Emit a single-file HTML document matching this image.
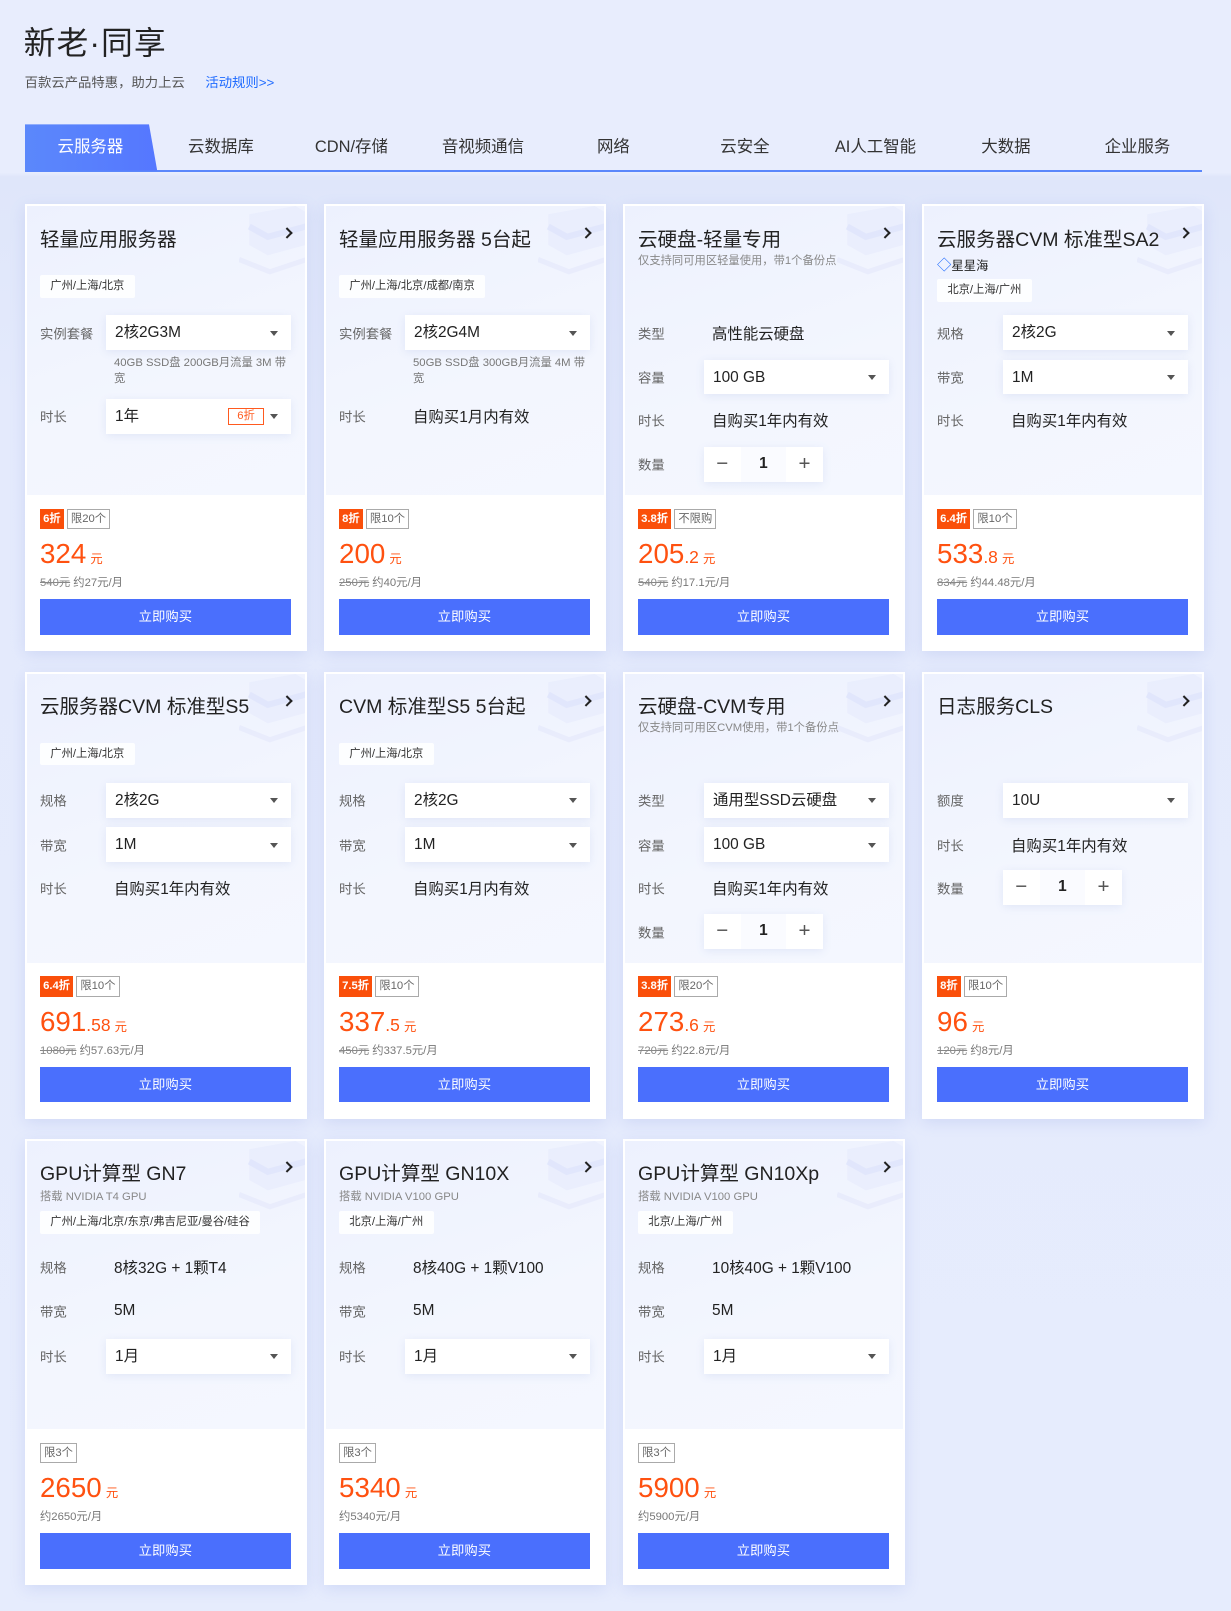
<!DOCTYPE html>
<html><head><meta charset="utf-8">
<style>
*{margin:0;padding:0;box-sizing:border-box}
html,body{width:1231px;height:1611px;overflow:hidden;background:#e3e9fb}
body{font-family:"Liberation Sans","Noto Sans CJK SC",sans-serif;color:#222}
#w{width:1198px;height:1568px;zoom:1.02755;position:relative;background:linear-gradient(180deg,#e8edfd 0,#e8edfd 168px,#dfe6fa 172px,#e4eafc 400px,#e6ecfd 100%)}
.h1{position:absolute;left:23px;top:18px;font-size:31px;color:#222;letter-spacing:1px}
.sub{position:absolute;left:24px;top:70px;font-size:13px;color:#555}
.sub a{color:#1f6bff;margin-left:20px;text-decoration:none}
.tabs{position:absolute;left:24px;top:121px;width:1146px;height:46px;border-bottom:2px solid #5b87fb}
.act{position:absolute;left:0;top:0;width:129px;height:45px;background:linear-gradient(90deg,#5b88fb,#5577ff);clip-path:polygon(0 0,121px 0,129px 45px,0 45px)}
.tab{position:absolute;top:0;height:45px;line-height:45px;font-size:16px;color:#333;transform:translateX(-50%);white-space:nowrap}
.card{position:absolute;width:275px;height:435px;background:#fff;box-shadow:0 4px 14px rgba(120,140,220,.2);overflow:hidden;border:2px solid #fff}
.top{position:absolute;left:0;top:0;right:0;height:281px;background:linear-gradient(160deg,#edf1fe,#f3f6fe 60%,#f4f7ff)}
.deco{position:absolute;right:-6px;top:0;width:70px;height:70px;opacity:.55}
.tt{position:absolute;left:13px;top:16px;font-size:19px;color:#222;white-space:nowrap}
.arr{position:absolute;right:14px;top:22px;width:8px;height:8px;border-top:2px solid #222;border-right:2px solid #222;transform:rotate(45deg)}
.st{position:absolute;left:13px;font-size:11px;color:#888;white-space:nowrap}
.tag{position:absolute;left:13px;height:22px;line-height:22px;padding:0 10px;background:rgba(255,255,255,.85);font-size:11px;color:#333;border-radius:2px;white-space:nowrap}
.lb{position:absolute;left:13px;font-size:13px;color:#666;transform:translateY(-50%)}
.val{position:absolute;left:85px;font-size:15px;color:#222;transform:translateY(-50%);white-space:nowrap}
.sel{position:absolute;left:77px;width:180px;height:34px;background:#fff;box-shadow:0 2px 8px rgba(100,120,200,.12);font-size:15px;line-height:36px;padding-left:9px;color:#222;white-space:nowrap}
.sel:after{content:"";position:absolute;right:12px;top:15px;border:4px solid transparent;border-top:5px solid #555;border-bottom:0}
.b6{position:absolute;right:26px;top:9px;height:17px;line-height:15px;border:1px solid #ff5a1f;color:#ff5a1f;font-size:11px;padding:0 8px}
.step{position:absolute;left:77px;width:116px;height:34px;display:flex;box-shadow:0 2px 8px rgba(100,120,200,.12)}
.step span{background:#fff;width:36px;text-align:center;line-height:34px;font-size:20px;color:#555}
.step span:nth-child(2){width:44px;background:#fafbff;font-size:15px;color:#222;font-weight:bold;line-height:34px}
.note{position:absolute;left:85px;width:172px;font-size:11px;color:#777;line-height:15px}
.bd{position:absolute;top:294px;left:13px;display:flex;gap:3px}
.o{background:#fa4f0a;color:#fff;font-size:11px;height:20px;line-height:20px;padding:0 3px;font-weight:bold}
.g{border:1px solid #aaa;color:#666;font-size:11px;height:20px;line-height:18px;padding:0 3px;background:#fff}
.pr{position:absolute;left:13px;top:323px;color:#ff5110;font-size:27px;white-space:nowrap}
.pr small{font-size:17px}.pr i{font-style:normal;font-size:12px;margin-left:4px}
.op{position:absolute;left:13px;top:358px;font-size:11px;color:#777;white-space:nowrap}
.op s{color:#888}
.btn{position:absolute;left:13px;top:382px;width:244px;height:35px;background:#4a6ffd;color:#fff;font-size:13px;text-align:center;line-height:35px}
</style></head><body><div id="w">
<div class="h1">新老·同享</div>
<div class="sub">百款云产品特惠，助力上云<a>活动规则&gt;&gt;</a></div>
<div class="tabs"><div class="act"></div>
<div class="tab" style="left:64px;color:#fff">云服务器</div>
<div class="tab" style="left:191px">云数据库</div>
<div class="tab" style="left:318px">CDN/存储</div>
<div class="tab" style="left:446px">音视频通信</div>
<div class="tab" style="left:573px">网络</div>
<div class="tab" style="left:701px">云安全</div>
<div class="tab" style="left:828px">AI人工智能</div>
<div class="tab" style="left:955px">大数据</div>
<div class="tab" style="left:1083px">企业服务</div>
</div>
<svg width="0" height="0" style="position:absolute"><defs><g id="dc"><path d="M10 8 L55 0 L72 10 L72 36 L28 48 L10 38Z" fill="#dfe4fb" opacity=".7"/><path d="M10 20 L28 30 L72 18" stroke="#cfd6fa" fill="none" stroke-width="6" opacity=".7"/><path d="M0 52 L30 64 L72 50" stroke="#e3e7fb" fill="none" stroke-width="5"/></g></defs></svg>

<!-- ROW 1 -->
<div class="card" style="left:24px;top:199px"><div class="top"></div><svg class="deco"><use href="#dc"/></svg>
<div class="tt">轻量应用服务器</div><div class="arr"></div>
<div class="tag" style="top:67px">广州/上海/北京</div>
<div class="lb" style="top:123px">实例套餐</div><div class="sel" style="top:106px">2核2G3M</div>
<div class="note" style="top:146px">40GB SSD盘 200GB月流量 3M 带宽</div>
<div class="lb" style="top:204px">时长</div><div class="sel" style="top:187px">1年<span class="b6">6折</span></div>
<div class="bd"><span class="o">6折</span><span class="g">限20个</span></div>
<div class="pr">324<i>元</i></div><div class="op"><s>540元</s> 约27元/月</div><div class="btn">立即购买</div></div>

<div class="card" style="left:315px;top:199px"><div class="top"></div><svg class="deco"><use href="#dc"/></svg>
<div class="tt">轻量应用服务器 5台起</div><div class="arr"></div>
<div class="tag" style="top:67px">广州/上海/北京/成都/南京</div>
<div class="lb" style="top:123px">实例套餐</div><div class="sel" style="top:106px">2核2G4M</div>
<div class="note" style="top:146px">50GB SSD盘 300GB月流量 4M 带宽</div>
<div class="lb" style="top:204px">时长</div><div class="val" style="top:204px">自购买1月内有效</div>
<div class="bd"><span class="o">8折</span><span class="g">限10个</span></div>
<div class="pr">200<i>元</i></div><div class="op"><s>250元</s> 约40元/月</div><div class="btn">立即购买</div></div>

<div class="card" style="left:606px;top:199px"><div class="top"></div><svg class="deco"><use href="#dc"/></svg>
<div class="tt">云硬盘-轻量专用</div><div class="arr"></div>
<div class="st" style="top:44px">仅支持同可用区轻量使用，带1个备份点</div>
<div class="lb" style="top:123px">类型</div><div class="val" style="top:123px">高性能云硬盘</div>
<div class="lb" style="top:166px">容量</div><div class="sel" style="top:149px">100 GB</div>
<div class="lb" style="top:208px">时长</div><div class="val" style="top:208px">自购买1年内有效</div>
<div class="lb" style="top:251px">数量</div><div class="step" style="top:234px"><span>−</span><span>1</span><span>+</span></div>
<div class="bd"><span class="o">3.8折</span><span class="g">不限购</span></div>
<div class="pr">205<small>.2</small><i>元</i></div><div class="op"><s>540元</s> 约17.1元/月</div><div class="btn">立即购买</div></div>

<div class="card" style="left:897px;top:199px"><div class="top"></div><svg class="deco"><use href="#dc"/></svg>
<div class="tt">云服务器CVM 标准型SA2</div><div class="arr"></div>
<div class="st" style="top:46px;color:#222;font-size:12px"><span style="color:#1f6bff;font-size:14px">◇</span>星星海</div>
<div class="tag" style="top:71px">北京/上海/广州</div>
<div class="lb" style="top:123px">规格</div><div class="sel" style="top:106px">2核2G</div>
<div class="lb" style="top:166px">带宽</div><div class="sel" style="top:149px">1M</div>
<div class="lb" style="top:208px">时长</div><div class="val" style="top:208px">自购买1年内有效</div>
<div class="bd"><span class="o">6.4折</span><span class="g">限10个</span></div>
<div class="pr">533<small>.8</small><i>元</i></div><div class="op"><s>834元</s> 约44.48元/月</div><div class="btn">立即购买</div></div>

<!-- ROW 2 -->
<div class="card" style="left:24px;top:654px"><div class="top"></div><svg class="deco"><use href="#dc"/></svg>
<div class="tt">云服务器CVM 标准型S5</div><div class="arr"></div>
<div class="tag" style="top:67px">广州/上海/北京</div>
<div class="lb" style="top:123px">规格</div><div class="sel" style="top:106px">2核2G</div>
<div class="lb" style="top:166px">带宽</div><div class="sel" style="top:149px">1M</div>
<div class="lb" style="top:208px">时长</div><div class="val" style="top:208px">自购买1年内有效</div>
<div class="bd"><span class="o">6.4折</span><span class="g">限10个</span></div>
<div class="pr">691<small>.58</small><i>元</i></div><div class="op"><s>1080元</s> 约57.63元/月</div><div class="btn">立即购买</div></div>

<div class="card" style="left:315px;top:654px"><div class="top"></div><svg class="deco"><use href="#dc"/></svg>
<div class="tt">CVM 标准型S5 5台起</div><div class="arr"></div>
<div class="tag" style="top:67px">广州/上海/北京</div>
<div class="lb" style="top:123px">规格</div><div class="sel" style="top:106px">2核2G</div>
<div class="lb" style="top:166px">带宽</div><div class="sel" style="top:149px">1M</div>
<div class="lb" style="top:208px">时长</div><div class="val" style="top:208px">自购买1月内有效</div>
<div class="bd"><span class="o">7.5折</span><span class="g">限10个</span></div>
<div class="pr">337<small>.5</small><i>元</i></div><div class="op"><s>450元</s> 约337.5元/月</div><div class="btn">立即购买</div></div>

<div class="card" style="left:606px;top:654px"><div class="top"></div><svg class="deco"><use href="#dc"/></svg>
<div class="tt">云硬盘-CVM专用</div><div class="arr"></div>
<div class="st" style="top:44px">仅支持同可用区CVM使用，带1个备份点</div>
<div class="lb" style="top:123px">类型</div><div class="sel" style="top:106px">通用型SSD云硬盘</div>
<div class="lb" style="top:166px">容量</div><div class="sel" style="top:149px">100 GB</div>
<div class="lb" style="top:208px">时长</div><div class="val" style="top:208px">自购买1年内有效</div>
<div class="lb" style="top:251px">数量</div><div class="step" style="top:234px"><span>−</span><span>1</span><span>+</span></div>
<div class="bd"><span class="o">3.8折</span><span class="g">限20个</span></div>
<div class="pr">273<small>.6</small><i>元</i></div><div class="op"><s>720元</s> 约22.8元/月</div><div class="btn">立即购买</div></div>

<div class="card" style="left:897px;top:654px"><div class="top"></div><svg class="deco"><use href="#dc"/></svg>
<div class="tt">日志服务CLS</div><div class="arr"></div>
<div class="lb" style="top:123px">额度</div><div class="sel" style="top:106px">10U</div>
<div class="lb" style="top:166px">时长</div><div class="val" style="top:166px">自购买1年内有效</div>
<div class="lb" style="top:208px">数量</div><div class="step" style="top:191px"><span>−</span><span>1</span><span>+</span></div>
<div class="bd"><span class="o">8折</span><span class="g">限10个</span></div>
<div class="pr">96<i>元</i></div><div class="op"><s>120元</s> 约8元/月</div><div class="btn">立即购买</div></div>

<!-- ROW 3 -->
<div class="card" style="left:24px;top:1108px"><div class="top"></div><svg class="deco"><use href="#dc"/></svg>
<div class="tt">GPU计算型 GN7</div><div class="arr"></div>
<div class="st" style="top:46px">搭载 NVIDIA T4 GPU</div>
<div class="tag" style="top:69px">广州/上海/北京/东京/弗吉尼亚/曼谷/硅谷</div>
<div class="lb" style="top:123px">规格</div><div class="val" style="top:123px">8核32G + 1颗T4</div>
<div class="lb" style="top:166px">带宽</div><div class="val" style="top:166px">5M</div>
<div class="lb" style="top:210px">时长</div><div class="sel" style="top:193px">1月</div>
<div class="bd"><span class="g">限3个</span></div>
<div class="pr">2650<i>元</i></div><div class="op">约2650元/月</div><div class="btn">立即购买</div></div>

<div class="card" style="left:315px;top:1108px"><div class="top"></div><svg class="deco"><use href="#dc"/></svg>
<div class="tt">GPU计算型 GN10X</div><div class="arr"></div>
<div class="st" style="top:46px">搭载 NVIDIA V100 GPU</div>
<div class="tag" style="top:69px">北京/上海/广州</div>
<div class="lb" style="top:123px">规格</div><div class="val" style="top:123px">8核40G + 1颗V100</div>
<div class="lb" style="top:166px">带宽</div><div class="val" style="top:166px">5M</div>
<div class="lb" style="top:210px">时长</div><div class="sel" style="top:193px">1月</div>
<div class="bd"><span class="g">限3个</span></div>
<div class="pr">5340<i>元</i></div><div class="op">约5340元/月</div><div class="btn">立即购买</div></div>

<div class="card" style="left:606px;top:1108px"><div class="top"></div><svg class="deco"><use href="#dc"/></svg>
<div class="tt">GPU计算型 GN10Xp</div><div class="arr"></div>
<div class="st" style="top:46px">搭载 NVIDIA V100 GPU</div>
<div class="tag" style="top:69px">北京/上海/广州</div>
<div class="lb" style="top:123px">规格</div><div class="val" style="top:123px">10核40G + 1颗V100</div>
<div class="lb" style="top:166px">带宽</div><div class="val" style="top:166px">5M</div>
<div class="lb" style="top:210px">时长</div><div class="sel" style="top:193px">1月</div>
<div class="bd"><span class="g">限3个</span></div>
<div class="pr">5900<i>元</i></div><div class="op">约5900元/月</div><div class="btn">立即购买</div></div>
</div></body></html>
